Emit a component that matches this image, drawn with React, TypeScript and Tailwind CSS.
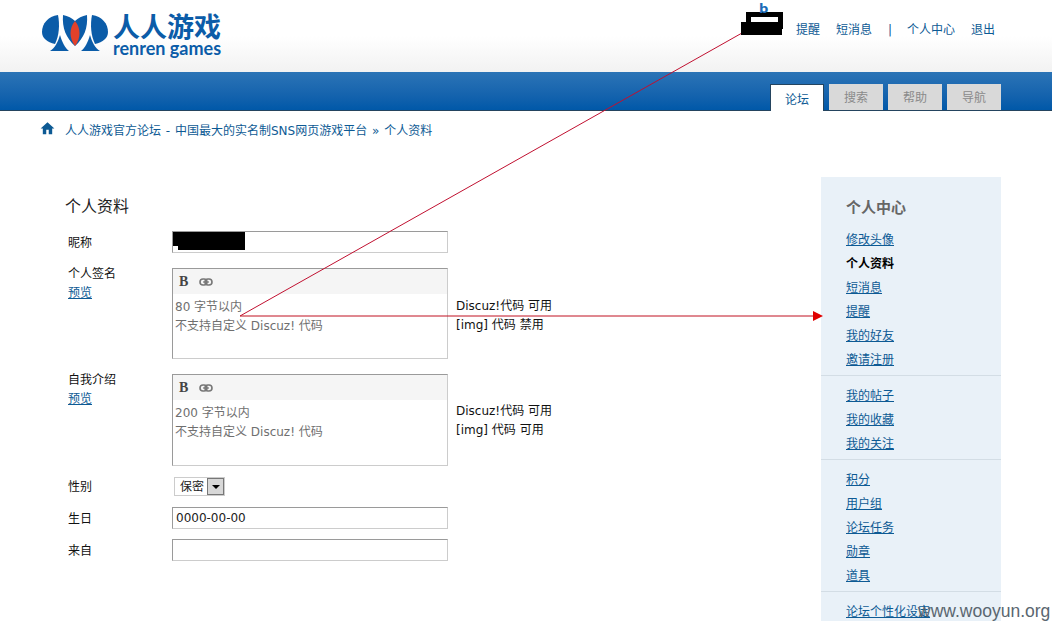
const font = "font-['DejaVu_Sans','Noto_Sans_CJK_SC',sans-serif]";

function Logo() {
    return (
        <div className="flex items-start">
            <svg width="70" height="40" viewBox="40 13 70 40" className="mt-[13px] ml-[40px]">
                <path d="M58,15 C48,16 42,24 42,32 C42,38 47,42 55,44 C59,36 60,25 58,15 Z" fill="#0b5ca8" />
                <path d="M50,51 C55,48 58,42 60,35 C62,42 65,48 69,51 Z" fill="#0b5ca8" />
                <path d="M63,15 C68,16 72,18 75,21 C78,18 82,16 87,15 C88,28 84,38 75,46 C66,38 62,28 63,15 Z" fill="#0b5ca8" />
                <path d="M75,21 C81,28 81,38 75,46 C69,38 69,28 75,21 Z" fill="#e2412a" />
                <path d="M92,15 C102,16 108,24 108,32 C108,38 103,42 95,44 C91,36 90,25 92,15 Z" fill="#0b5ca8" />
                <path d="M81,51 C85,48 88,42 90,35 C92,42 95,48 100,51 Z" fill="#0b5ca8" />
            </svg>
            <div className="ml-[3px] mt-[11px] flex flex-col">
                <span className="font-['Noto_Sans_CJK_SC',sans-serif] font-bold text-[27px] leading-[30px] text-[#0b5ca8]">人人游戏</span>
                <span className="font-['Lato',sans-serif] font-bold text-[18px] leading-[14px] text-[#0b5ca8]">renren games</span>
            </div>
        </div>
    );
}

function LinkIcon() {
    return (
        <svg width="14" height="8" viewBox="0 0 14 8" fill="none" stroke="#777" strokeWidth="1.6">
            <rect x="1" y="1" width="7" height="6" rx="3" />
            <rect x="6" y="1" width="7" height="6" rx="3" />
            <line x1="4" y1="4" x2="10" y2="4" strokeWidth="1.2" />
        </svg>
    );
}

function Editor({ limit, height }: { limit: string; height: string }) {
    return (
        <div className={`w-[276px] ${height} border border-[#9a9a9a] border-r-[#ccc] border-b-[#ccc] bg-white`}>
            <div className="h-[25px] bg-[#f5f5f5] flex items-center gap-[11px] pl-[6px]">
                <span className="font-['Liberation_Serif',serif] font-bold text-[14px] text-[#444]">B</span>
                <LinkIcon />
            </div>
            <div className="px-[2px] pt-[4px] text-[12px] leading-[19px] text-[#6f6f6f]">
                <div>{limit} 字节以内</div>
                <div>不支持自定义 Discuz! 代码</div>
            </div>
        </div>
    );
}

function Label({ text, preview, className }: { text: string; preview?: boolean; className?: string }) {
    return (
        <div className={`w-[106px] pl-[2px] text-[12px] leading-[19px] text-[#111] ${className ?? ''}`}>
            <div>{text}</div>
            {preview && <a className="underline text-[#0d5a94]">预览</a>}
        </div>
    );
}

function Input({ value }: { value?: string }) {
    return (
        <div className="w-[276px] h-[22px] border border-[#9a9a9a] border-r-[#ccc] border-b-[#ccc] bg-white px-[3px] text-[12px] leading-[20px] text-[#222]">
            {value}
        </div>
    );
}

const groups = [
    ['修改头像', '个人资料', '短消息', '提醒', '我的好友', '邀请注册'],
    ['我的帖子', '我的收藏', '我的关注'],
    ['积分', '用户组', '论坛任务', '勋章', '道具'],
    ['论坛个性化设定'],
];

export default function App() {
    return (
        <div className={`relative w-[1052px] h-[621px] overflow-hidden bg-white ${font}`}>
            {/* Header */}
            <div className="h-[72px] bg-gradient-to-b from-white from-50% to-[#f2f2f2] flex justify-between">
                <Logo />
                <div className="flex items-start pt-[22px] pr-[57px] text-[12px] leading-[17px] text-[#0d5a94]">
                    <a>提醒</a>
                    <a className="ml-[16px]">短消息</a>
                    <span className="ml-[16px]">|</span>
                    <a className="ml-[15px]">个人中心</a>
                    <a className="ml-[16px]">退出</a>
                </div>
            </div>

            {/* Blue band and tabs */}
            <div className="h-[39px] bg-gradient-to-b from-[#2b74b6] to-[#0058a8] border-b border-[#24445f] flex justify-end items-end gap-[5px] pr-[51px]">
                <div className="w-[54px] h-[27px] -mb-px bg-white border-t border-x border-[#24445f] text-center text-[12px] leading-[31px] text-[#0d5a94]">论坛</div>
                {['搜索', '帮助', '导航'].map(t => (
                    <div key={t} className="w-[54px] h-[26px] bg-[#d9d9d9] text-center text-[12px] leading-[29px] text-[#8a8a8a]">{t}</div>
                ))}
            </div>

            {/* Breadcrumb */}
            <div className="h-[66px] flex items-start pt-[12px] pl-[40px] text-[12px] leading-[17px] text-[#0d5a94] [word-spacing:1px]">
                <svg width="15" height="15" viewBox="0 0 24 24" fill="#0d5a94" className="mr-[10px] -mt-[2px]">
                    <path d="M10 21v-7h4v7h5.500v-9H23L12 2 1 12h3.500v9z" />
                </svg>
                <span>人人游戏官方论坛 - 中国最大的实名制SNS网页游戏平台 » 个人资料</span>
            </div>

            <div className="flex justify-between pr-[51px]">
                {/* Form */}
                <div className="pl-[66px] pt-[20px]">
                    <h2 className="-ml-px text-[16px] leading-[20px] text-[#222] mb-[14px]">个人资料</h2>
                    <div className="flex flex-col">
                        <div className="flex items-center mb-[15px]">
                            <Label text="昵称" className="pt-[2px]" />
                            <div className="relative">
                                <Input />
                                <div className="absolute left-[1px] top-[1px] w-[72px] h-[14px] bg-black" />
                                <div className="absolute left-[6px] top-[9px] w-[67px] h-[10px] bg-black" />
                            </div>
                        </div>
                        <div className="flex mb-[15px]">
                            <Label text="个人签名" preview className="-mt-[3px]" />
                            <Editor limit="80" height="h-[91px]" />
                            <div className="ml-[8px] pt-[29px] text-[12px] leading-[19px] text-[#111]">
                                <div>Discuz!代码 可用</div>
                                <div>[img] 代码 禁用</div>
                            </div>
                        </div>
                        <div className="flex mb-[10px]">
                            <Label text="自我介绍" preview className="-mt-[3px]" />
                            <Editor limit="200" height="h-[92px]" />
                            <div className="ml-[8px] pt-[28px] text-[12px] leading-[19px] text-[#111]">
                                <div>Discuz!代码 可用</div>
                                <div>[img] 代码 可用</div>
                            </div>
                        </div>
                        <div className="flex items-center mb-[10px] h-[21px]">
                            <Label text="性别" className="pt-[1px]" />
                            <div className="ml-[2px] w-[51px] h-[19px] border border-[#ccc] flex items-center justify-between text-[12px] text-[#222] pl-[5px]">
                                <span>保密</span>
                                <div className="w-[17px] h-[17px] bg-[#d8d8d8] border border-[#777] flex items-center justify-center">
                                    <div className="w-0 h-0 border-x-[4px] border-x-transparent border-t-[4px] border-t-black" />
                                </div>
                            </div>
                        </div>
                        <div className="flex items-center mb-[10px]">
                            <Label text="生日" className="pt-[2px]" />
                            <Input value="0000-00-00" />
                        </div>
                        <div className="flex items-center">
                            <Label text="来自" className="pt-[2px]" />
                            <Input />
                        </div>
                    </div>
                </div>

                {/* Sidebar */}
                <div className="w-[180px] h-[444px] bg-[#e9f1f8] pt-[21px]">
                    <h3 className="pl-[25px] text-[15px] leading-[20px] font-bold text-[#666] mb-[10px]">个人中心</h3>
                    {groups.map((items, i) => (
                        <div key={i} className={i < 3 ? 'pb-[3px] mb-[8px] border-b border-[#d3dde5]' : ''}>
                            {items.map(item => (
                                <div key={item} className="pl-[25px] h-[24px] text-[12px] leading-[24px]">
                                    {item === '个人资料'
                                        ? <span className="font-bold text-black">{item}</span>
                                        : <a className="underline text-[#0d5a94]">{item}</a>}
                                </div>
                            ))}
                        </div>
                    ))}
                </div>
            </div>

            {/* Annotations drawn over the screenshot */}
            <svg width="1052" height="621" className="absolute left-0 top-0 pointer-events-none">
                <line x1="240" y1="316" x2="742" y2="33" stroke="#c01030" strokeWidth="1" />
                <line x1="240" y1="316" x2="816" y2="316" stroke="#c01020" strokeWidth="1" />
                <polygon points="813,311 823,316 813,321" fill="#e00000" />
            </svg>
            <div className="absolute left-[746px] top-[12px] w-[37px] h-[17px] bg-black" />
            <div className="absolute left-[741px] top-[22px] w-[41px] h-[13px] bg-black" />
            <div className="absolute left-[751px] top-[17px] w-[27px] h-[5px] bg-white" />
            <span className="absolute left-[759px] top-[0px] text-[13px] leading-[17px] font-bold text-[#1a6cb8]">b</span>
            <span className="absolute left-[918px] top-[601px] font-['Liberation_Sans',sans-serif] text-[17.5px] leading-[20px] text-[#5a6670]">www.wooyun.org</span>
        </div>
    );
}
